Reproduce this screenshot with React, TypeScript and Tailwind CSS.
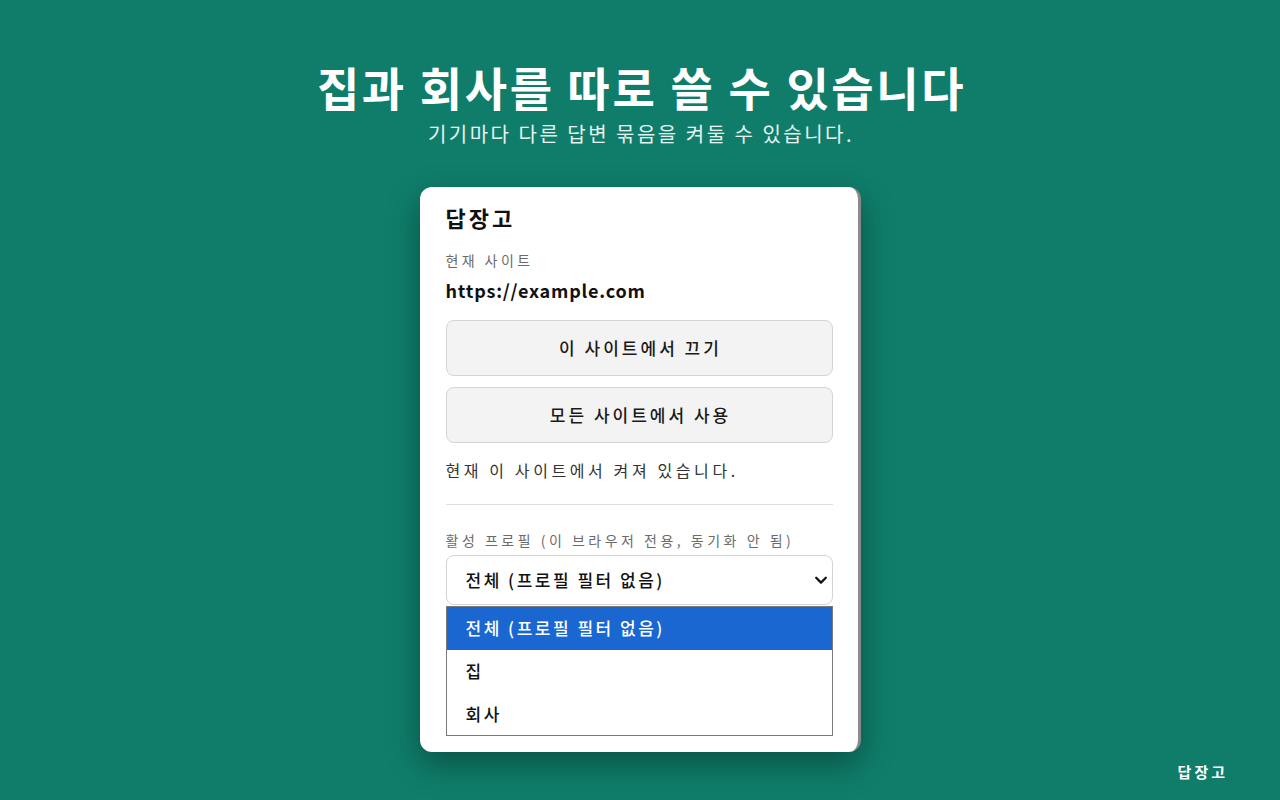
const font = "font-['Noto_Sans_CJK_KR','Noto_Sans',sans-serif]";

const ChevronDown = () => (
  <svg width="14" height="14" viewBox="0 0 16 16" fill="none" stroke="#111" strokeWidth="2.6" strokeLinecap="round" strokeLinejoin="round">
    <path d="M2.5 5.5 8 11l5.5-5.5" />
  </svg>
);

const ActionButton = ({ label }: { label: string }) => (
  <button className="flex h-[56px] w-full items-center justify-center rounded-lg border-[1.5px] border-[#d4d4d4] bg-[#f3f3f3] pl-[3px] text-[17px] font-medium leading-6 tracking-[3px] text-[#1a1a1a]">
    {label}
  </button>
);

const options = ["전체 (프로필 필터 없음)", "집", "회사"];

const Popup = () => (
  <div className="flex h-[565px] w-[441px] flex-col rounded-xl border-r-[3px] border-r-[#8a8a8a] bg-white pl-[26px] pr-[25px] pt-[16px] shadow-[0_12px_32px_rgba(0,0,0,0.35)]">
    <h2 className="text-[22px] font-bold leading-7 tracking-[3px] text-[#111]">답장고</h2>
    <p className="mt-[19px] text-[14px] leading-5 tracking-[3.4px] text-[#6b6b6b]">현재 사이트</p>
    <p className="mt-2 text-[18px] font-bold leading-6 tracking-[0.8px] text-[#111]">https://example.com</p>
    <div className="mt-[18px] flex flex-col gap-[11px]">
      <ActionButton label="이 사이트에서 끄기" />
      <ActionButton label="모든 사이트에서 사용" />
    </div>
    <p className="mt-[15px] text-[16px] leading-6 tracking-[3.6px] text-[#333]">현재 이 사이트에서 켜져 있습니다.</p>
    <div className="mt-[22px] h-px w-full bg-[#dedede]" />
    <p className="mt-[25px] text-[14px] leading-5 tracking-[3.5px] text-[#6b6b6b]">활성 프로필 (이 브라우저 전용, 동기화 안 됨)</p>
    <div className="mt-[5px] flex h-[50px] w-full items-center justify-between rounded-lg border-[1.5px] border-[#d4d4d4] pl-[19px] pr-[4px]">
      <span className="text-[17px] font-medium leading-6 tracking-[2.5px] text-[#111]">{options[0]}</span>
      <ChevronDown />
    </div>
    <ul className="mt-px flex h-[130px] w-full flex-col border border-[#7a7a7a]">
      {options.map((o, i) => (
        <li
          key={o}
          className={`flex h-[43px] items-center pl-[19px] text-[17px] font-medium leading-6 tracking-[2.5px] ${
            i === 0 ? "bg-[#1a67d2] text-white" : "text-[#111]"
          }`}
        >
          {o}
        </li>
      ))}
    </ul>
  </div>
);

export default function App() {
  return (
    <div className={`${font} flex h-[800px] w-full flex-col items-center overflow-hidden bg-[#0f7d6a]`}>
      <h1 className="pl-[3px] pt-[60px] text-[46px] font-bold leading-[52px] tracking-[2.6px] text-white">집과 회사를 따로 쓸 수 있습니다</h1>
      <p className="mt-[8px] pl-[2px] text-[20px] leading-7 tracking-[2.5px] text-white/90">기기마다 다른 답변 묶음을 켜둘 수 있습니다.</p>
      <div className="mt-[39px]">
        <Popup />
      </div>
      <div className="mt-[10px] flex w-full justify-end pr-[52px]">
        <span className="text-[15px] font-bold leading-5 tracking-[3px] text-white">답장고</span>
      </div>
    </div>
  );
}
